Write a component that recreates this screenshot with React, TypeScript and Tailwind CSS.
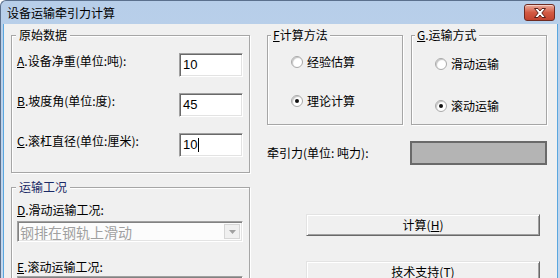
import React from "react";

function Key({ k }: { k: string }) {
  return <span className="underline underline-offset-[1px] decoration-1">{k}</span>;
}

function Group({
  title,
  className,
  legendClass,
  children,
}: {
  title: React.ReactNode;
  className: string;
  legendClass: string;
  children: React.ReactNode;
}) {
  return (
    <fieldset
      className={
        "border border-[#a6a6a6] shadow-[inset_1px_1px_0_#ffffff,1px_1px_0_#ffffff] " + className
      }
    >
      <legend
        className={"bg-[#f0f0f0] text-[12px] leading-[14px] " + legendClass}
      >
        {title}
      </legend>
      {children}
    </fieldset>
  );
}

function Sunken({ value, caret }: { value: string; caret?: boolean }) {
  return (
    <div className="w-[64px] h-[24px] shrink-0 flex items-center pl-[3px] bg-white border border-t-[#a0a0a0] border-l-[#a0a0a0] border-b-[#ffffff] border-r-[#ffffff] shadow-[inset_1px_1px_0_#696969,inset_-1px_-1px_0_#e3e3e3] font-['Liberation_Sans',sans-serif] text-[13px] leading-[14px] text-black">
      {value}
      {caret && <span className="ml-[1px] w-px h-[14px] bg-black" />}
    </div>
  );
}

function Radio({ label, checked }: { label: string; checked?: boolean }) {
  return (
    <div className="flex items-center gap-[4px] h-[14px]">
      <span className="w-[12px] h-[12px] rounded-full bg-white border border-[#a9a9a9] shadow-[inset_1px_1px_1px_#c4c4c4] flex items-center justify-center">
        {checked && <span className="w-[4px] h-[4px] rounded-full bg-[#111111]" />}
      </span>
      <span className="text-[12px] leading-[14px]">{label}</span>
    </div>
  );
}

function Combo({ text }: { text: string }) {
  return (
    <div className="w-[226px] h-[21px] flex items-center bg-[#fcfcfc] border border-t-[#a0a0a0] border-l-[#a0a0a0] border-b-[#ffffff] border-r-[#ffffff] shadow-[inset_1px_1px_0_#828282,inset_-1px_-1px_0_#e3e3e3] pl-[2px] pr-[2px]">
      <span className="text-[14px] leading-[16px] text-[#a0a0a0]">{text}</span>
      <span className="ml-auto w-[16px] h-[15px] flex items-center justify-center bg-[#f0f0f0] border border-[#d6d6d6]">
        <svg width="7" height="4" viewBox="0 0 7 4">
          <path d="M0 0 H7 L3.5 4 Z" fill="#a0a0a0" />
        </svg>
      </span>
    </div>
  );
}

function Button({ children, className }: { children: React.ReactNode; className: string }) {
  return (
    <div
      className={
        "w-[234px] h-[22px] flex items-center justify-center bg-[#f0f0f0] border border-t-[#e3e3e3] border-l-[#e3e3e3] border-b-[#696969] border-r-[#696969] shadow-[inset_1px_1px_0_#ffffff,inset_-1px_-1px_0_#a0a0a0] text-[12px] leading-[14px] " +
        className
      }
    >
      {children}
    </div>
  );
}

export default function App() {
  return (
    <div className="w-[560px] h-[278px] overflow-hidden flex flex-col bg-gradient-to-b from-[#b7cee9] to-[#c5d8ee] border-l border-t border-[#5b708d] rounded-tl-[6px] font-['Noto_Sans_CJK_SC','Liberation_Sans',sans-serif] text-black">
      <div className="h-[23px] shrink-0 flex items-start justify-between pl-[6px] pr-[5px]">
        <span className="mt-[5px] text-[12px] leading-[14px]">设备运输牵引力计算</span>
        <div className="mt-[3px] w-[31px] h-[17px] rounded-[3px] border border-[#6e2b22] bg-gradient-to-b from-[#e9aa9b] via-[#d35a43] to-[#c2432f] shadow-[inset_0_1px_0_#f4cfc6] flex items-center justify-center">
          <svg width="14" height="10" viewBox="0 0 14 10">
            <path
              d="M1.5 0.5 H5 L7 3 L9 0.5 H12.5 L8.8 5 L12.5 9.5 H9 L7 7 L5 9.5 H1.5 L5.2 5 Z"
              fill="#ffffff"
              stroke="#5b2018"
              strokeWidth="1"
            />
          </svg>
        </div>
      </div>

      <div className="flex-1 mx-[2px] bg-[#f0f0f0] border-x border-[#5aa7df] flex pl-[7px] gap-[17px]">
        {/* left column */}
        <div className="w-[239px] shrink-0 flex flex-col">
          <Group title="原始数据" className="mt-[4px] h-[145px]" legendClass="ml-[4px] px-[3px]">
            <div className="pt-[11px] pl-[5px] pr-[6px] flex flex-col gap-[16px]">
              <div className="flex items-start justify-between h-[24px]">
                <span className="mt-[1px] text-[12px] leading-[14px]">
                  <Key k="A" />.设备净重(单位:吨):
                </span>
                <Sunken value="10" />
              </div>
              <div className="flex items-start justify-between h-[24px]">
                <span className="mt-[1px] text-[12px] leading-[14px]">
                  <Key k="B" />.坡度角(单位:度):
                </span>
                <Sunken value="45" />
              </div>
              <div className="flex items-start justify-between h-[24px]">
                <span className="mt-[1px] text-[12px] leading-[14px]">
                  <Key k="C" />.滚杠直径(单位:厘米):
                </span>
                <Sunken value="10" caret />
              </div>
            </div>
          </Group>

          <Group
            title="运输工况"
            className="mt-[7px] h-[120px]"
            legendClass="ml-[4px] px-[3px] text-[#1b2a66]"
          >
            <div className="pt-[9px] pl-[5px] pr-[6px] flex flex-col">
              <span className="text-[12px] leading-[14px]">
                <Key k="D" />.滑动运输工况:
              </span>
              <div className="mt-[4px]">
                <Combo text="钢排在钢轨上滑动" />
              </div>
              <span className="mt-[18px] text-[12px] leading-[14px]">
                <Key k="E" />.滚动运输工况:
              </span>
              <div className="mt-[2px]">
                <Combo text="" />
              </div>
            </div>
          </Group>
        </div>

        {/* right column */}
        <div className="w-[280px] shrink-0 flex flex-col">
          <div className="mt-[4px] flex gap-[8px]">
            <Group
              title={
                <>
                  <Key k="F" />计算方法
                </>
              }
              className="w-[136px] h-[97px]"
              legendClass="ml-[3px] px-[2px]"
            >
              <div className="pt-[13px] pl-[23px] flex flex-col">
                <Radio label="经验估算" />
                <div className="mt-[25px]">
                  <Radio label="理论计算" checked />
                </div>
              </div>
            </Group>
            <Group
              title={
                <>
                  <Key k="G" />.运输方式
                </>
              }
              className="w-[136px] h-[97px]"
              legendClass="ml-[3px] px-[2px]"
            >
              <div className="pt-[15px] pl-[23px] flex flex-col">
                <Radio label="滑动运输" />
                <div className="mt-[28px]">
                  <Radio label="滚动运输" checked />
                </div>
              </div>
            </Group>
          </div>

          <div className="mt-[16px] h-[24px] flex items-center justify-between">
            <span className="text-[12px] leading-[14px]">牵引力(单位: 吨力):</span>
            <div className="w-[137px] h-[24px] bg-[#b4b4b4] border-2 border-[#6a6a6a]" />
          </div>

          <Button className="mt-[49px] ml-[39px]">
            计算(<Key k="H" />)
          </Button>
          <Button className="mt-[25px] ml-[39px]">
            技术支持(<Key k="T" />)
          </Button>
        </div>
      </div>
    </div>
  );
}
